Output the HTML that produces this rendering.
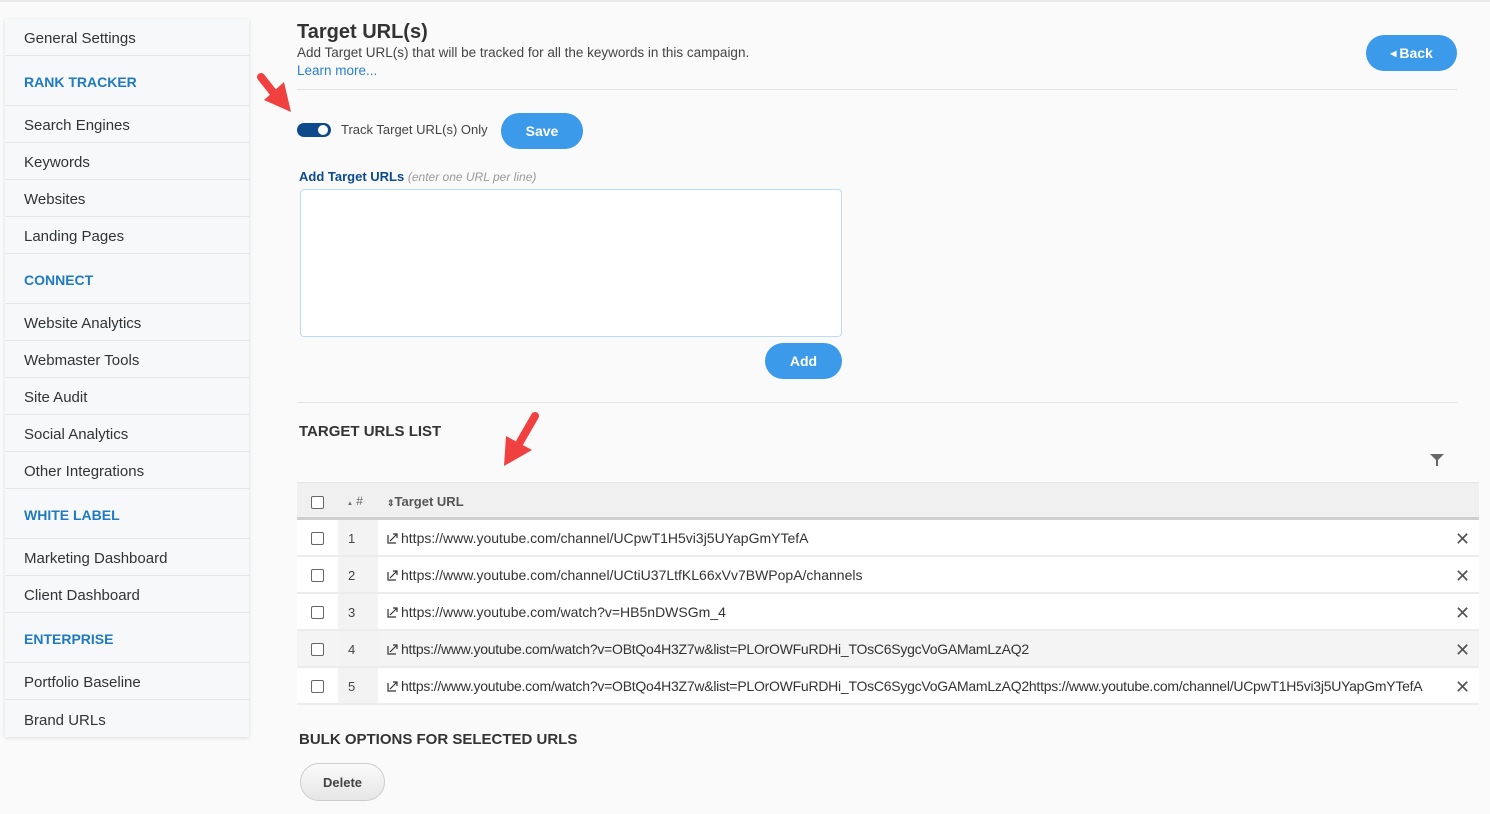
<!DOCTYPE html>
<html><head><meta charset="utf-8"><style>
*{box-sizing:border-box;margin:0;padding:0}
body{width:1490px;height:814px;background:#fafafa;font-family:"Liberation Sans",sans-serif;color:#333;position:relative;overflow:hidden}
.abs{position:absolute}
.topline{left:0;top:0;width:1490px;height:2px;background:#e8e8e8}
.side{left:5px;top:19px;width:244px;height:718px;background:#f7f8fa;box-shadow:0 1px 4px rgba(0,0,0,.12)}
.side div{position:absolute;left:0;width:244px;border-bottom:1px solid #e3e5e8;padding-left:19px;padding-top:3px;font-size:15px;color:#333;display:flex;align-items:center}
.side div.h{color:#1f7ac2;font-size:14px;font-weight:bold}
h1{font-size:20px;font-weight:bold;color:#333}
.btn{background:#3c9aeb;color:#fff;font-weight:bold;border-radius:20px;display:flex;align-items:center;justify-content:center;font-size:14px}
.hr{height:1px;background:#e3e3e3}
.row{left:297px;width:1182px;height:37px;background:#fff;border-bottom:2px solid #ececec}
.row .cb{position:absolute;left:14px;top:12px;width:13px;height:13px;border:1px solid #666;border-radius:2px;background:#fff}
.row .num{position:absolute;left:41px;top:0;width:40px;height:35px;background:#f3f3f3;font-size:13px;padding-left:10px;line-height:37px;color:#444}
.row .url{position:absolute;left:90px;top:0;height:35px;line-height:37px;font-size:14px;white-space:nowrap;color:#333}
.row .x{position:absolute;left:1158px;top:11px;font-size:18px;color:#555;line-height:16px}
.ext{display:inline-block;width:11px;height:11px;margin-right:3px;vertical-align:-1px}
</style></head><body>
<div class="abs topline"></div>
<div class="abs side">
<div style="top:0;height:37px">General Settings</div>
<div class="h" style="top:37px;height:50px">RANK TRACKER</div>
<div style="top:87px;height:37px">Search Engines</div>
<div style="top:124px;height:37px">Keywords</div>
<div style="top:161px;height:37px">Websites</div>
<div style="top:198px;height:37px">Landing Pages</div>
<div class="h" style="top:235px;height:50px">CONNECT</div>
<div style="top:285px;height:37px">Website Analytics</div>
<div style="top:322px;height:37px">Webmaster Tools</div>
<div style="top:359px;height:37px">Site Audit</div>
<div style="top:396px;height:37px">Social Analytics</div>
<div style="top:433px;height:37px">Other Integrations</div>
<div class="h" style="top:470px;height:50px">WHITE LABEL</div>
<div style="top:520px;height:37px">Marketing Dashboard</div>
<div style="top:557px;height:37px">Client Dashboard</div>
<div class="h" style="top:594px;height:50px">ENTERPRISE</div>
<div style="top:644px;height:37px">Portfolio Baseline</div>
<div style="top:681px;height:37px;border:none">Brand URLs</div>
</div>

<h1 class="abs" style="left:297px;top:21px">Target URL(s)</h1>
<div class="abs" style="left:297px;top:45px;font-size:13.5px;color:#444">Add Target URL(s) that will be tracked for all the keywords in this campaign.</div>
<div class="abs" style="left:297px;top:63px;font-size:13.5px;color:#2a7fd0">Learn more...</div>
<div class="abs btn" style="left:1366px;top:35px;width:91px;height:36px;font-size:14px"><span style="font-size:8px;margin-right:3px">◀</span>Back</div>
<div class="abs hr" style="left:297px;top:89px;width:1160px"></div>

<svg class="abs" style="left:252px;top:68px" width="44" height="48"><path d="M9 9 L24 28" stroke="#f04040" stroke-width="8" stroke-linecap="round"/><path d="M12 32 L39 44 L32 14 Z" fill="#f04040"/></svg>

<div class="abs" style="left:297px;top:123px;width:34px;height:14px;border-radius:8px;background:#0d4a8c"><div style="position:absolute;right:3px;top:2px;width:10px;height:10px;border-radius:5px;background:#fff"></div></div>
<div class="abs" style="left:341px;top:122px;font-size:13px;color:#444">Track Target URL(s) Only</div>
<div class="abs btn" style="left:501px;top:113px;width:82px;height:36px">Save</div>

<div class="abs" style="left:299px;top:169px;font-size:13px"><b style="color:#0d4a8c">Add Target URLs</b> <i style="color:#999;font-size:12px">(enter one URL per line)</i></div>
<div class="abs" style="left:300px;top:189px;width:542px;height:148px;background:#fff;border:1px solid #b9dcf7;border-radius:4px"></div>
<div class="abs btn" style="left:765px;top:343px;width:77px;height:36px">Add</div>
<div class="abs hr" style="left:297px;top:402px;width:1160px"></div>

<div class="abs" style="left:299px;top:423px;font-size:15px;font-weight:bold;color:#333">TARGET URLS LIST</div>
<svg class="abs" style="left:496px;top:408px" width="50" height="62"><path d="M39 8 L24 34" stroke="#f04040" stroke-width="8" stroke-linecap="round"/><path d="M10 28 L8 58 L36 42 Z" fill="#f04040"/></svg>
<svg class="abs" style="left:1429px;top:453px" width="16" height="14"><path d="M1 1 H15 L9 7 V13 H7 V7 Z" fill="#666"/></svg>

<div class="abs" style="left:297px;top:482px;width:1182px;height:38px;background:#f0f0f0;border-top:1px solid #e6e6e6;border-bottom:3px solid #cfcfcf">
<div style="position:absolute;left:14px;top:13px;width:13px;height:13px;border:1px solid #666;border-radius:2px;background:#fff"></div>
<div style="position:absolute;left:50px;top:11px;font-size:12px;color:#666"><span style="font-size:6px">▲</span> #</div>
<div style="position:absolute;left:90px;top:11px;font-size:13px;color:#555;font-weight:bold"><span style="font-size:9px">⇕</span>Target URL</div>
</div>

<svg width="0" height="0" style="position:absolute"><defs><symbol id="e" viewBox="0 0 11 11"><path d="M1 2 V10 H9" fill="none" stroke="#333" stroke-width="1.2"/><path d="M3 8 L10 1 M6 1 H10 V5" fill="none" stroke="#333" stroke-width="1.2"/></symbol></defs></svg>

<div class="abs row" style="top:520px"><div class="cb"></div><div class="num">1</div><div class="url"><svg class="ext"><use href="#e"/></svg>https://www.youtube.com/channel/UCpwT1H5vi3j5UYapGmYTefA</div><div class="x">✕</div></div>
<div class="abs row" style="top:557px"><div class="cb"></div><div class="num">2</div><div class="url"><svg class="ext"><use href="#e"/></svg>https://www.youtube.com/channel/UCtiU37LtfKL66xVv7BWPopA/channels</div><div class="x">✕</div></div>
<div class="abs row" style="top:594px"><div class="cb"></div><div class="num">3</div><div class="url"><svg class="ext"><use href="#e"/></svg>https://www.youtube.com/watch?v=HB5nDWSGm_4</div><div class="x">✕</div></div>
<div class="abs row" style="top:631px;background:#f4f4f4"><div class="cb"></div><div class="num">4</div><div class="url" style="letter-spacing:-0.25px"><svg class="ext"><use href="#e"/></svg>https://www.youtube.com/watch?v=OBtQo4H3Z7w&amp;list=PLOrOWFuRDHi_TOsC6SygcVoGAMamLzAQ2</div><div class="x">✕</div></div>
<div class="abs row" style="top:668px"><div class="cb"></div><div class="num">5</div><div class="url" style="letter-spacing:-0.25px"><svg class="ext"><use href="#e"/></svg>https://www.youtube.com/watch?v=OBtQo4H3Z7w&amp;list=PLOrOWFuRDHi_TOsC6SygcVoGAMamLzAQ2https://www.youtube.com/channel/UCpwT1H5vi3j5UYapGmYTefA</div><div class="x">✕</div></div>

<div class="abs" style="left:299px;top:731px;font-size:15px;font-weight:bold;color:#333">BULK OPTIONS FOR SELECTED URLS</div>
<div class="abs" style="left:300px;top:763px;width:85px;height:38px;border:1px solid #ccc;border-radius:19px;background:linear-gradient(#fafafa,#e6e6e6);font-size:13px;font-weight:bold;color:#444;display:flex;align-items:center;justify-content:center">Delete</div>
</body></html>
